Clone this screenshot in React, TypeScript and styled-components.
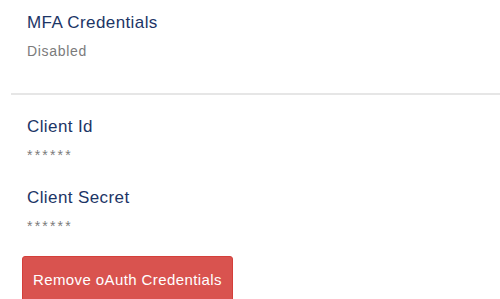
import React from "react";
import styled, { createGlobalStyle } from "styled-components";

const Global = createGlobalStyle`
  html, body { margin: 0; padding: 0; background: #fff; }
  body { font-family: "Liberation Sans", Arial, sans-serif; }
`;

const Page = styled.div`
  padding: 13px 0 0 11px;
  overflow: hidden;
  height: 299px;
  box-sizing: border-box;
`;

const Section = styled.div<{ $bottom: number }>`
  padding-left: 16px;
  margin-bottom: ${(p) => p.$bottom}px;
`;

const Field = styled.div<{ $bottom: number }>`
  display: flex;
  flex-direction: column;
  margin-bottom: ${(p) => p.$bottom}px;
`;

const Label = styled.div`
  font-size: 17px;
  line-height: 20px;
  letter-spacing: 0.4px;
  color: #1c3566;
  margin-bottom: 8px;
`;

const Value = styled.div<{ $masked?: boolean }>`
  font-size: 14px;
  line-height: 20px;
  letter-spacing: ${(p) => (p.$masked ? "2.2px" : "0.7px")};
  color: #7b7b7b;
`;

const Divider = styled.hr`
  border: 0;
  border-top: 2px solid #e6e6e6;
  margin: 0 0 22px 0;
  height: 0;
`;

const DangerButton = styled.button`
  margin-left: 11px;
  background: #d9534f;
  color: #fff;
  border: 1px solid #d43f3a;
  border-radius: 3px;
  font-family: "Liberation Sans", Arial, sans-serif;
  font-size: 15px;
  letter-spacing: 0.4px;
  line-height: 20px;
  padding: 13px 10px 14px;
  cursor: pointer;
`;

export default function App() {
  return (
    <>
      <Global />
      <Page>
        <Section $bottom={32}>
          <Field $bottom={0}>
            <Label>MFA Credentials</Label>
            <Value>Disabled</Value>
          </Field>
        </Section>
        <Divider />
        <Section $bottom={20}>
          <Field $bottom={23}>
            <Label>Client Id</Label>
            <Value $masked>******</Value>
          </Field>
          <Field $bottom={0}>
            <Label>Client Secret</Label>
            <Value $masked>******</Value>
          </Field>
        </Section>
        <DangerButton>Remove oAuth Credentials</DangerButton>
      </Page>
    </>
  );
}
